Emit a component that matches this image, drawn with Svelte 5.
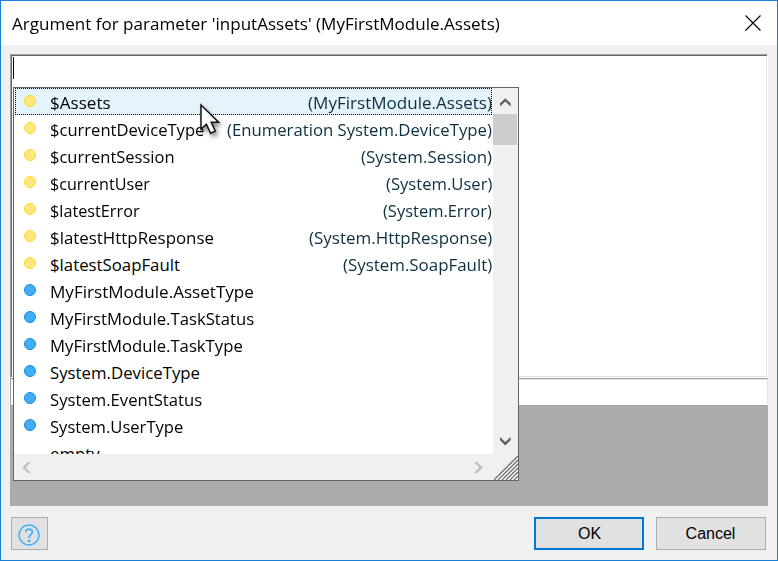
<script>
  const variables = [
    { name: '$Assets', width: 61, type: '(MyFirstModule.Assets)', typeWidth: 184 },
    { name: '$currentDeviceType', width: 154, type: '(Enumeration System.DeviceType)', typeWidth: 265 },
    { name: '$currentSession', width: 125, type: '(System.Session)', typeWidth: 131 },
    { name: '$currentUser', width: 100, type: '(System.User)', typeWidth: 106 },
    { name: '$latestError', width: 90, type: '(System.Error)', typeWidth: 109 },
    { name: '$latestHttpResponse', width: 164, type: '(System.HttpResponse)', typeWidth: 183 },
    { name: '$latestSoapFault', width: 130, type: '(System.SoapFault)', typeWidth: 149 }
  ];
  const enums = [
    { name: 'MyFirstModule.AssetType', width: 203.5 },
    { name: 'MyFirstModule.TaskStatus', width: 204 },
    { name: 'MyFirstModule.TaskType', width: 193 },
    { name: 'System.DeviceType', width: 150 },
    { name: 'System.EventStatus', width: 152 },
    { name: 'System.UserType', width: 133.5 }
  ];
  const rows = [
    ...variables.map((v) => ({ ...v, kind: 'variable' })),
    ...enums.map((e) => ({ ...e, kind: 'enum' })),
    { name: 'empty', width: 50, kind: 'none' }
  ];

  function fit(node, width) {
    const scale = width / node.offsetWidth;
    node.style.transform = `scaleX(${scale})`;
  }
</script>

<div class="dialog">
  <header>
    <h1><span class="label" use:fit={488}>Argument for parameter 'inputAssets' (MyFirstModule.Assets)</span></h1>
    <svg class="close" width="16" height="16" viewBox="0 0 16 16"><path d="M.5 .5 15.5 15.5M15.5 .5 .5 15.5" stroke="#000" stroke-width="1.1" /></svg>
  </header>

  <main>
    <div class="editor"><i class="caret"></i></div>
    <div class="grid"><div class="gridrow"></div></div>
  </main>

  <footer>
    <button class="help" aria-label="Help">
      <svg width="22" height="22" viewBox="0 0 22 22" fill="none" stroke="#47b0f5">
        <circle cx="11" cy="11" r="9.9" stroke-width="1.5" />
        <path d="M7.7 8.2V7.8C7.8 6 9.2 5.1 11 5.1s3.4 1 3.4 2.9c0 2.6-3.3 2.5-3.3 5.2v.7" stroke-width="1.7" />
        <path d="M9.6 17h3M11.1 15.7v2.5" stroke-width="1.6" />
      </svg>
    </button>
    <button class="ok">OK</button>
    <button class="cancel">Cancel</button>
  </footer>

  <div class="popup">
    <div class="upper">
      <ul>
        {#each rows as row, i}
          <li class:selected={i === 0}>
            <i class="dot {row.kind}"></i>
            <span class="label" use:fit={row.width}>{row.name}</span>
            {#if row.type}<span class="type" use:fit={row.typeWidth}>{row.type}</span>{/if}
          </li>
        {/each}
      </ul>
      <div class="vbar">
        <svg width="24" height="26" viewBox="0 0 24 26"><path d="M7 18.5v-3.2l5.3-5.1 5.3 5.1v3.2L12.3 13.5z" fill="#606060" /></svg>
        <div class="thumb"></div>
        <svg class="down" width="24" height="26" viewBox="0 0 24 26"><path d="M7 8v3.2l5.3 5.3 5.3-5.3V8L12.3 13.1z" fill="#606060" /></svg>
      </div>
    </div>
    <div class="hbar">
      <svg width="24" height="25" viewBox="0 0 24 25"><path d="M17 7h-3L8.3 12.5l5.7 5.5h3L11.5 12.5z" fill="#bfbfbf" /></svg>
      <svg class="right" width="24" height="25" viewBox="0 0 24 25"><path d="M4 7h3.2l5.5 5.5-5.5 5.5H4L9.3 12.5z" fill="#bfbfbf" /></svg>
      <svg class="grip" width="24" height="25" viewBox="0 0 24 25">
        <path d="M0 25 24 1V25z" fill="#fff" />
        <path d="M0 25 24 1M4 25 24 5M8 25 24 9M12 25 24 13M16 25 24 17M20 25 24 21" stroke="#707070" stroke-width="1.3" />
      </svg>
    </div>
  </div>

  <svg class="cursor" width="30" height="40" viewBox="0 0 30 40">
    <path d="M6 5v24l5.4-4.8 4.2 9 4.7-2.1-4.1-8.9h7.4z" fill="#fff" stroke="#111" stroke-width="1.5" />
  </svg>
</div>

<style>
  :global(body) { margin: 0; }
  .dialog {
    position: relative;
    box-sizing: border-box;
    width: 778px;
    height: 561px;
    border: 1px solid #1a7fd4;
    background: #f0f0f0;
    display: flex;
    flex-direction: column;
    font-family: "Open Sans", "Noto Sans", sans-serif;
    font-size: 16.8px;
    color: #000;
    overflow: hidden;
  }
  header {
    height: 44px;
    background: #fff;
    display: flex;
    justify-content: space-between;
    padding: 0 16px 0 11px;
    flex: none;
  }
  h1 { margin: 0; font-size: 17px; font-weight: 400; line-height: 46px; }
  .label, .type { display: inline-block; white-space: nowrap; transform-origin: left center; flex: none; }
  .close { margin-top: 13.5px; }
  main { padding: 9px 9px 0; flex: none; }
  .editor {
    box-sizing: border-box;
    width: 758px;
    height: 324px;
    background: #fff;
    border: 1px solid #a0a0a0;
    border-right-color: #fff;
    border-bottom-color: #fff;
    box-shadow: inset 1px 1px #696969, inset -1px -1px #e3e3e3;
    padding: 2px;
  }
  .caret { display: block; width: 1px; height: 22px; background: #000; }
  .grid {
    box-sizing: border-box;
    width: 758px;
    height: 128px;
    background: #ababab;
    border-top: 1px solid #a0a0a0;
  }
  .gridrow {
    box-sizing: border-box;
    height: 27px;
    background: #fff;
    border: 1px solid #e3e3e3;
    border-left-color: #a0a0a0;
    border-bottom-color: #a0a0a0;
  }
  footer { display: flex; padding: 11px 11px 0 10px; }
  button {
    box-sizing: border-box;
    width: 110px;
    height: 33px;
    padding: 0;
    border: 1px solid #adadad;
    background: #e1e1e1;
    font: 16px "Liberation Sans", Arial, sans-serif;
    color: #000;
  }
  .help { width: 37px; display: flex; justify-content: center; align-items: center; padding: 3px 1px 0 0; margin-right: auto; }
  .ok { border: 2px solid #0078d7; margin-right: 12px; padding-left: 1px; }
  .cancel { padding-right: 1px; }
  .popup {
    position: absolute;
    left: 12px;
    top: 86px;
    box-sizing: border-box;
    width: 506px;
    height: 394px;
    border: 1px solid #646464;
    background: #f0f0f0;
  }
  .upper { display: flex; height: 367px; }
  ul { margin: 0; padding: 0; width: 479px; height: 366px; overflow: hidden; list-style: none; background: #fff; }
  li {
    position: relative;
    box-sizing: border-box;
    height: 27px;
    margin: 0 1px;
    padding: 1px 0 0 9px;
    display: flex;
    align-items: center;
    line-height: 27px;
  }
  .selected { background: #e5f3fb; outline: 1px dotted #000; outline-offset: -1px; }
  .dot { box-sizing: border-box; width: 12px; height: 12px; border-radius: 50%; margin: -2px 14px 0 0; flex: none; }
  .variable { background: #ffe680; border: 1.5px solid #ffd91c; }
  .enum { background: #42aef7; border: 1.5px solid #1789dc; }
  .type { margin-left: auto; transform-origin: right center; color: #0d3040; }
  .vbar { width: 25px; display: flex; flex-direction: column; }
  .thumb { width: 24px; height: 31px; background: #cdcdcd; }
  .down { margin-top: auto; }
  .hbar { display: flex; height: 25px; }
  .right { margin-left: auto; }
  .cursor { position: absolute; left: 194px; top: 99px; filter: drop-shadow(2px 3px 2px rgba(0, 0, 0, .45)); }
</style>
